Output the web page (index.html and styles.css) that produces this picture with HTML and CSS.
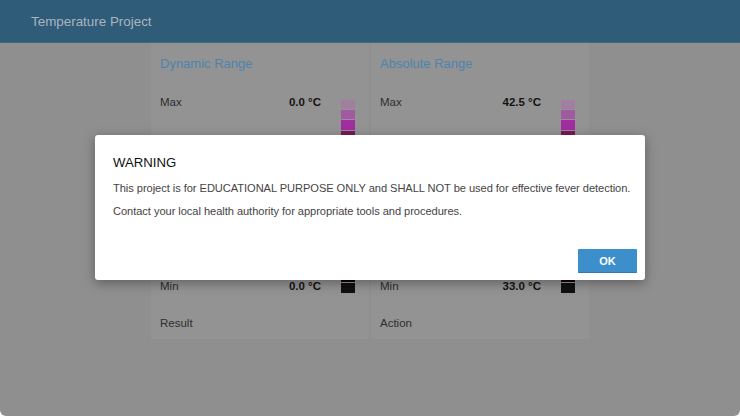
FILE: index.html
```html
<!DOCTYPE html>
<html lang="en">
<head>
<meta charset="utf-8">
<title>Temperature Project</title>
<link rel="stylesheet" href="styles.css">
</head>
<body>
<div class="app">
  <header class="topbar">
    <span class="brand">Temperature Project</span>
  </header>
  <main class="content">
    <section class="card">
      <h2 class="card-title">Dynamic Range</h2>
      <div class="range">
        <div class="readings">
          <div class="reading"><span class="label">Max</span><span class="value">0.0 °C</span></div>
          <div class="reading"><span class="label">Min</span><span class="value">0.0 °C</span></div>
        </div>
        <div class="scale">
          <i class="sw s1"></i><i class="sw s2"></i><i class="sw s3"></i><i class="sw s4"></i><i class="sw s5"></i><i class="sw s6"></i><i class="sw s7"></i><i class="sw s8"></i><i class="sw s9"></i><i class="sw s10"></i><i class="sw s11"></i><i class="sw s12"></i><i class="sw s13"></i><i class="sw s14"></i><i class="sw s15"></i><i class="sw s16"></i><i class="sw s17"></i><i class="sw s18"></i><i class="sw s19"></i>
        </div>
      </div>
      <div class="footer-label">Result</div>
    </section>
    <section class="card">
      <h2 class="card-title">Absolute Range</h2>
      <div class="range">
        <div class="readings">
          <div class="reading"><span class="label">Max</span><span class="value">42.5 °C</span></div>
          <div class="reading"><span class="label">Min</span><span class="value">33.0 °C</span></div>
        </div>
        <div class="scale">
          <i class="sw s1"></i><i class="sw s2"></i><i class="sw s3"></i><i class="sw s4"></i><i class="sw s5"></i><i class="sw s6"></i><i class="sw s7"></i><i class="sw s8"></i><i class="sw s9"></i><i class="sw s10"></i><i class="sw s11"></i><i class="sw s12"></i><i class="sw s13"></i><i class="sw s14"></i><i class="sw s15"></i><i class="sw s16"></i><i class="sw s17"></i><i class="sw s18"></i><i class="sw s19"></i>
        </div>
      </div>
      <div class="footer-label">Action</div>
    </section>
  </main>

  <div class="overlay">
    <div class="dialog" role="dialog" aria-labelledby="dlg-title">
      <h1 class="dialog-title" id="dlg-title">WARNING</h1>
      <p class="dialog-text">This project is for EDUCATIONAL PURPOSE ONLY and SHALL NOT be used for effective fever detection.</p>
      <p class="dialog-text">Contact your local health authority for appropriate tools and procedures.</p>
      <div class="dialog-actions">
        <button class="btn-ok" type="button">OK</button>
      </div>
    </div>
  </div>
</div>
</body>
</html>
```

FILE: styles.css
```css
html {
  background: #ffffff;
}
body {
  margin: 0;
  font-family: "Liberation Sans", Arial, sans-serif;
}
.app {
  position: relative;
  height: 416px;
  background: #8f8f8f;
  border-radius: 0 0 6px 6px;
  overflow: hidden;
}
.topbar {
  height: 43px;
  background: #2f5c79;
  display: flex;
  align-items: center;
  padding-left: 31px;
  box-sizing: border-box;
  border-bottom: 1px solid #3f6985;
}
.brand {
  color: #aab4be;
  font-size: 13.4px;
}
.content {
  display: flex;
  justify-content: center;
  gap: 2px;
}
.card {
  width: 218px;
  height: 296px;
  background: #939393;
  box-sizing: border-box;
  padding: 13px 14px 0 9px;
  display: flex;
  flex-direction: column;
}
.card-title {
  margin: 0;
  font-size: 13px;
  font-weight: 400;
  color: #4d84ad;
  line-height: 16px;
}
.range {
  display: flex;
  margin-top: 28px;
  height: 193px;
}
.readings {
  flex: 1;
  display: flex;
  flex-direction: column;
  justify-content: space-between;
  padding-right: 20px;
}
.reading {
  display: flex;
  justify-content: space-between;
  font-size: 11.5px;
  line-height: 14px;
}
.reading:first-child {
  margin-top: -5px;
}
.label {
  color: #2e2e2e;
}
.value {
  font-weight: 700;
  color: #141414;
}
.scale {
  width: 14px;
  display: flex;
  flex-direction: column;
  gap: 1px;
}
.sw {
  display: block;
  height: 9.2px;
}
.s1 { background: #a07fa0; }
.s2 { background: #a05ba0; }
.s3 { background: #a02ea0; }
.s4 { background: #781a58; }
.s5 { background: #6a1650; }
.s6 { background: #601448; }
.s7 { background: #561240; }
.s8 { background: #4c1038; }
.s9 { background: #440e32; }
.s10 { background: #3c0c2c; }
.s11 { background: #340a26; }
.s12 { background: #2e0922; }
.s13 { background: #28081e; }
.s14 { background: #22071a; }
.s15 { background: #1e0616; }
.s16 { background: #1a0513; }
.s17 { background: #160410; }
.s18 { background: #13030d; }
.s19 { background: #101010; }
.footer-label {
  margin-top: 24px;
  font-size: 11.5px;
  color: #2e2e2e;
}
.overlay {
  position: absolute;
  inset: 0;
  display: flex;
  justify-content: center;
  padding-top: 135px;
  box-sizing: border-box;
}
.dialog {
  width: 550px;
  height: 145px;
  background: #ffffff;
  border-radius: 3px;
  box-shadow: 0 3px 12px rgba(0, 0, 0, 0.35);
  box-sizing: border-box;
  padding: 20px 8px 7px 18px;
  display: flex;
  flex-direction: column;
}
.dialog-title {
  margin: 0;
  font-size: 13.2px;
  font-weight: 400;
  color: #111111;
  line-height: 16px;
}
.dialog-text {
  margin: 10px 0 0;
  font-size: 11.1px;
  letter-spacing: -0.05px;
  line-height: 15px;
  color: #444444;
  white-space: nowrap;
}
.dialog-text + .dialog-text {
  margin-top: 8px;
}
.dialog-actions {
  margin-top: auto;
  display: flex;
  justify-content: flex-end;
}
.btn-ok {
  width: 59px;
  height: 24px;
  border: 0;
  border-bottom: 1px solid #2f7ab5;
  border-radius: 1px;
  background: #3d8fcc;
  color: #ffffff;
  font-family: "Liberation Sans", Arial, sans-serif;
  font-size: 11px;
  font-weight: 700;
  padding: 0;
}
```
